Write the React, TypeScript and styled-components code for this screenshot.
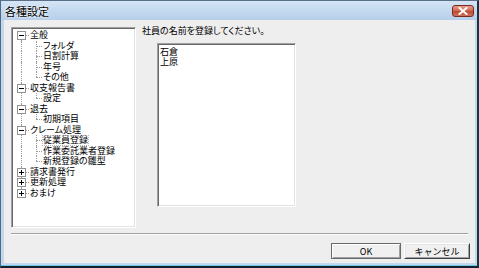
import styled, { createGlobalStyle, css } from 'styled-components';

const GlobalStyle = createGlobalStyle`
  html, body { margin: 0; padding: 0; background: #ffffff; }
  body {
    font-family: "Noto Sans CJK JP", "Noto Sans", sans-serif;
    font-feature-settings: "palt";
    color: #000;
  }
`;

type VLine = 'full' | 'top' | 'bottom' | 'none';

interface TreeNode {
  label: string;
  open: boolean;
  children: string[];
}

const nodes: TreeNode[] = [
  { label: '全般', open: true, children: ['フォルダ', '日割計算', '年号', 'その他'] },
  { label: '収支報告書', open: true, children: ['設定'] },
  { label: '退去', open: true, children: ['初期項目'] },
  { label: 'クレーム処理', open: true, children: ['従業員登録', '作業委託業者登録', '新規登録の雛型'] },
  { label: '請求書発行', open: false, children: [] },
  { label: '更新処理', open: false, children: [] },
  { label: 'おまけ', open: false, children: [] },
];

const employees = ['石倉', '上原'];

const Window = styled.div`
  width: 479px;
  height: 268px;
  box-sizing: border-box;
  display: flex;
  flex-direction: column;
  background: #c3d7ed;
  border-top: 1px solid #5a6f88;
  border-left: 1px solid #4f6884;
  border-right: 2px solid #173544;
  border-bottom: 2px solid #14222e;
  box-shadow: inset 0 -1px 0 #6cc6e6;
`;

const TitleBar = styled.div`
  height: 19px;
  display: flex;
  align-items: center;
  justify-content: space-between;
  padding: 0 3px 0 4px;
  background: linear-gradient(to bottom, #d5e5f5 0%, #c4d9ef 50%, #b6cfe9 100%);
`;

const Title = styled.span`
  font-size: 11px;
  line-height: 12px;
  margin-top: 1px;
  color: #000;
  text-shadow: 0 0 3px #ffffff, 0 0 2px #ffffff;
`;

const CloseButton = styled.div`
  width: 22px;
  height: 12px;
  margin-top: 1px;
  box-sizing: border-box;
  border: 1px solid #7a2b20;
  border-radius: 3px;
  background: linear-gradient(to bottom, #e6a08f 0%, #d26a55 45%, #c04a34 55%, #d0705a 100%);
  display: flex;
  align-items: center;
  justify-content: center;
`;

const Client = styled.div`
  flex: 1;
  margin: 0 2px 3px 3px;
  background: #eeeeee;
  padding: 7px 5px 0 7px;
  display: flex;
  flex-direction: column;
`;

const ContentRow = styled.div`
  display: flex;
  gap: 6px;
  height: 201px;
`;

const sunken = css`
  box-sizing: border-box;
  background: #ffffff;
  border-style: solid;
  border-width: 1px;
  border-color: #a0a0a0 #ffffff #ffffff #a0a0a0;
  box-shadow: inset 1px 1px 0 #696969, inset -1px -1px 0 #e3e3e3;
`;

const TreeBox = styled.div`
  ${sunken};
  width: 125px;
  height: 201px;
  padding: 2px 0 0 1px;
  overflow: hidden;
`;

const Row = styled.div`
  display: flex;
  align-items: stretch;
  height: 10.5px;
  font-size: 9px;
  line-height: 10.5px;
  white-space: nowrap;
`;

const Gutter = styled.span<{ $v: VLine; $h: boolean; $w: number; $x: number }>`
  position: relative;
  flex: none;
  width: ${(p) => p.$w}px;

  &::before {
    content: '';
    position: absolute;
    display: ${(p) => (p.$v === 'none' ? 'none' : 'block')};
    left: ${(p) => p.$x}px;
    top: ${(p) => (p.$v === 'bottom' ? '50%' : '0')};
    bottom: ${(p) => (p.$v === 'top' ? '50%' : '0')};
    border-left: 1px dotted #9a9a9a;
  }

  &::after {
    content: '';
    position: absolute;
    display: ${(p) => (p.$h ? 'block' : 'none')};
    left: ${(p) => p.$x}px;
    right: 0;
    top: 5px;
    border-top: 1px dotted #9a9a9a;
  }
`;

const Expander = styled.span<{ $open: boolean }>`
  position: absolute;
  z-index: 1;
  left: 4px;
  top: 1px;
  width: 9px;
  height: 9px;
  box-sizing: border-box;
  border: 1px solid #919191;
  background: #ffffff;

  &::before {
    content: '';
    position: absolute;
    left: 1px;
    right: 1px;
    top: 3px;
    height: 1px;
    background: #000;
  }

  &::after {
    content: '';
    position: absolute;
    display: ${(p) => (p.$open ? 'none' : 'block')};
    top: 1px;
    bottom: 1px;
    left: 3px;
    width: 1px;
    background: #000;
  }
`;

const Label = styled.span<{ $focus?: boolean }>`
  padding: 0 1px;
  box-sizing: border-box;
  outline: ${(p) => (p.$focus ? '1px dotted #b8b8b8' : 'none')};
  outline-offset: -1px;
`;

const RightPane = styled.div`
  display: flex;
  flex-direction: column;
`;

const Prompt = styled.div`
  font-size: 9px;
  line-height: 10px;
  margin-top: -1px;
`;

const ListBox = styled.div`
  ${sunken};
  width: 139px;
  height: 164px;
  margin: 7px 0 0 15px;
  padding: 3px 2px;
  display: flex;
  flex-direction: column;
`;

const ListItem = styled.div`
  font-size: 9px;
  line-height: 10px;
`;

const Separator = styled.div`
  margin: 5px 2px 0 0;
  height: 1px;
  background: #a0a0a0;
  border-bottom: 1px solid #ffffff;
`;

const ButtonRow = styled.div`
  display: flex;
  justify-content: flex-end;
  gap: 3px;
  margin-top: 8px;
`;

const Button = styled.button<{ $default?: boolean; $w: number }>`
  width: ${(p) => p.$w}px;
  height: 16px;
  padding: 0;
  font-family: inherit;
  font-size: 9px;
  line-height: 9px;
  color: #000;
  background: #f0f0f0;
  box-sizing: border-box;
  border-style: solid;
  border-width: 1px;
  border-color: ${(p) => (p.$default ? '#696969' : '#ffffff #404040 #404040 #ffffff')};
  box-shadow: ${(p) =>
    p.$default
      ? 'inset 1px 1px 0 #ffffff, inset -1px -1px 0 #a0a0a0'
      : 'inset 1px 1px 0 #e3e3e3, inset -1px -1px 0 #a0a0a0'};
`;

function CloseGlyph() {
  return (
    <svg width="10" height="8" viewBox="0 0 10 8">
      <path d="M1.5 1 L8.5 7 M8.5 1 L1.5 7" stroke="#ffffff" strokeWidth="2" strokeLinecap="square" />
    </svg>
  );
}

function Tree() {
  const rows: JSX.Element[] = [];
  nodes.forEach((node, i) => {
    const isFirst = i === 0;
    const isLast = i === nodes.length - 1;
    const rootLine: VLine = isFirst ? 'bottom' : isLast ? 'top' : 'full';
    rows.push(
      <Row key={node.label}>
        <Gutter $v={rootLine} $h $w={16} $x={8}>
          <Expander $open={node.open} />
        </Gutter>
        <Label>{node.label}</Label>
      </Row>
    );
    if (node.open) {
      node.children.forEach((child, j) => {
        const lastChild = j === node.children.length - 1;
        rows.push(
          <Row key={node.label + child}>
            <Gutter $v={isLast ? 'none' : 'full'} $h={false} $w={16} $x={8} />
            <Gutter $v={lastChild ? 'top' : 'full'} $h $w={13} $x={7} />
            <Label $focus={child === '従業員登録'}>{child}</Label>
          </Row>
        );
      });
    }
  });
  return <TreeBox>{rows}</TreeBox>;
}

export default function App() {
  return (
    <>
      <GlobalStyle />
      <Window>
        <TitleBar>
          <Title>各種設定</Title>
          <CloseButton>
            <CloseGlyph />
          </CloseButton>
        </TitleBar>
        <Client>
          <ContentRow>
            <Tree />
            <RightPane>
              <Prompt>社員の名前を登録してください。</Prompt>
              <ListBox>
                {employees.map((name) => (
                  <ListItem key={name}>{name}</ListItem>
                ))}
              </ListBox>
            </RightPane>
          </ContentRow>
          <Separator />
          <ButtonRow>
            <Button $default $w={70}>OK</Button>
            <Button $w={66}>キャンセル</Button>
          </ButtonRow>
        </Client>
      </Window>
    </>
  );
}
